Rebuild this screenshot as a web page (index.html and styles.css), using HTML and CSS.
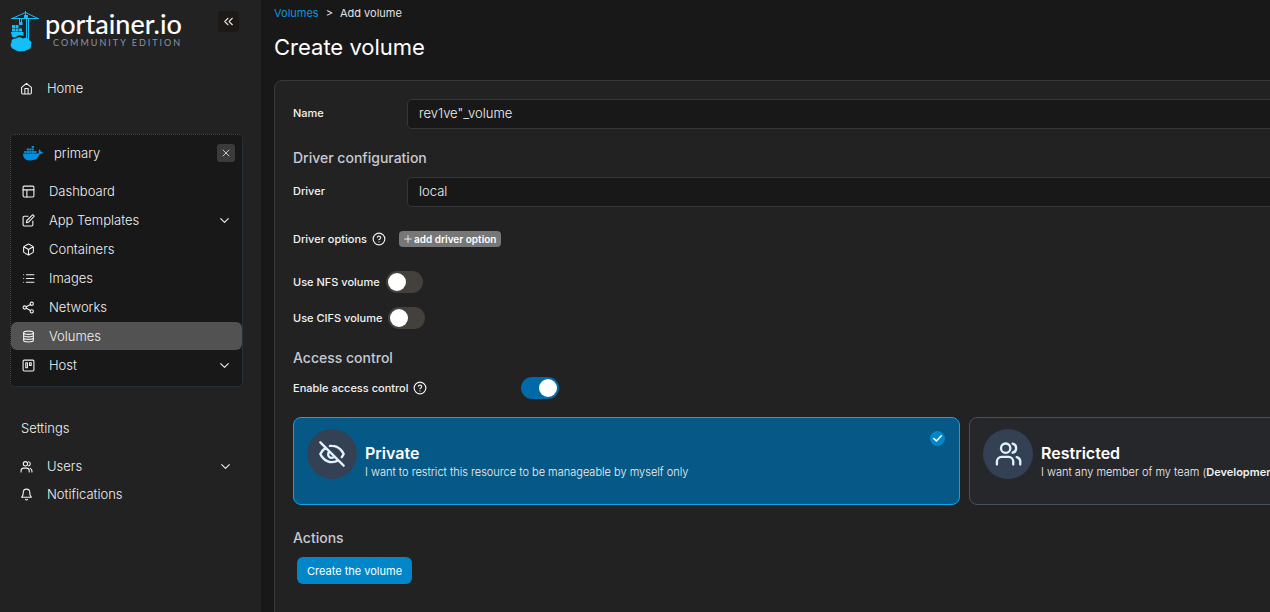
FILE: index.html
```html
<!DOCTYPE html>
<html lang="en">
<head>
<meta charset="utf-8">
<title>Create volume</title>
<link rel="stylesheet" href="styles.css">
</head>
<body>
<svg class="sprite" aria-hidden="true">
  <symbol id="home" viewBox="0 0 24 24"><path d="M3 10l9-7.500 9 7.500v10a2 2 0 0 1-2 2H5a2 2 0 0 1-2-2zM9 22V12h6v10"/></symbol>
  <symbol id="layout" viewBox="0 0 24 24"><rect x="2" y="2" width="20" height="20" rx="2"/><path d="M2 9h20M9 22V9"/></symbol>
  <symbol id="edit" viewBox="0 0 24 24"><path d="M11 4H4a2 2 0 0 0-2 2v14a2 2 0 0 0 2 2h14a2 2 0 0 0 2-2v-7"/><path d="M18.500 2.500a2.120 2.120 0 0 1 3 3L12 15l-4 1 1-4z"/></symbol>
  <symbol id="box" viewBox="0 0 24 24"><path d="M21 16V8a2 2 0 0 0-1-1.730l-7-4a2 2 0 0 0-2 0l-7 4A2 2 0 0 0 3 8v8a2 2 0 0 0 1 1.730l7 4a2 2 0 0 0 2 0l7-4A2 2 0 0 0 21 16zM3.300 7L12 12l8.700-5M12 22V12"/></symbol>
  <symbol id="list" viewBox="0 0 24 24"><path d="M8 5h14M8 12h14M8 19h14M3 5h.01M3 12h.01M3 19h.01"/></symbol>
  <symbol id="share" viewBox="0 0 24 24"><circle cx="18" cy="5" r="3"/><circle cx="5" cy="12" r="3"/><circle cx="18" cy="19" r="3"/><path d="M8 13.500l7.500 4M15.500 6.500l-7.500 4"/></symbol>
  <symbol id="database" viewBox="0 0 24 24"><ellipse cx="12" cy="5" rx="9" ry="3"/><path d="M3 5v14c0 1.660 4 3 9 3s9-1.340 9-3V5M3 9.700c0 1.660 4 3 9 3s9-1.340 9-3M3 14.300c0 1.660 4 3 9 3s9-1.340 9-3"/></symbol>
  <symbol id="trello" viewBox="0 0 24 24"><rect x="2" y="2" width="20" height="20" rx="2"/><path d="M7 7h3v9H7zM14 7h3v5h-3z"/></symbol>
  <symbol id="users" viewBox="0 0 24 24"><path d="M17 22v-2a5 5 0 0 0-5-5H7a5 5 0 0 0-5 5v2M22 22v-2a5 5 0 0 0-3-4.500M16 3.130a4 4 0 0 1 0 7.750"/><circle cx="10" cy="7" r="4"/></symbol>
  <symbol id="team" viewBox="0 0 24 24"><path d="M16.500 21v-2.500a4 4 0 0 0-4-4h-6a4 4 0 0 0-4 4V21M22.500 21v-2.500a4 4 0 0 0-3-3.870M16 3.130a4 4 0 0 1 0 7.750"/><circle cx="10" cy="7" r="4"/></symbol>
  <symbol id="bell" viewBox="0 0 24 24"><path d="M6 8a6 6 0 0 1 12 0c0 7 3 9 3 9H3s3-2 3-9M10.300 21a1.940 1.940 0 0 0 3.400 0"/></symbol>
  <symbol id="down" viewBox="0 0 24 24"><path d="M5 8.500l7 7 7-7"/></symbol>
  <symbol id="close" viewBox="0 0 24 24"><path d="M18 6L6 18M6 6l12 12"/></symbol>
  <symbol id="collapse" viewBox="0 0 24 24"><path d="M11 18l-6-6 6-6M19 18l-6-6 6-6"/></symbol>
  <symbol id="help" viewBox="0 0 24 24"><circle cx="12" cy="12" r="10"/><path d="M9.100 9a3 3 0 0 1 5.800 1c0 2-3 3-3 3M12 17h.01"/></symbol>
  <symbol id="plus" viewBox="0 0 24 24"><path d="M12 4v16M4 12h16"/></symbol>
  <symbol id="eyeoff" viewBox="0 0 24 24"><path d="M10.200 5.100A10.500 10.500 0 0 1 12 5c7 0 10 7 10 7a13 13 0 0 1-1.700 2.700M6.600 6.600A13.500 13.500 0 0 0 2 12s3 7 10 7a9.700 9.700 0 0 0 5.400-1.600M9.900 9.900a3 3 0 1 0 4.200 4.200M2 2l20 20"/></symbol>
  <symbol id="check" viewBox="0 0 24 24"><path d="M19 7L10 16.500 5 12"/></symbol>
</svg>
<div class="app">
  <aside class="sidebar">
    <header class="brand">
      <svg class="crane" viewBox="0 0 30 42" aria-hidden="true">
        <path class="crane-line" d="M1 8.500h28M2 8.500L15.500 2.500 28 8.500M15.500 1v8M9.500 9v5M11.500 9v5M16.500 9v22M18.500 9v22"/>
        <path class="crane-fill" d="M14 5h4v3h-4zM9 12h3.500v3H9zM2 15h3v3H2zM5.500 15h3v3h-3zM2 18.500h3v3H2zM5.500 18.500h3v3h-3zM9 18.500h3v3H9zM1 22h12.500v4q-5-2-8 1.500-3 0-3.500-1z"/>
        <path class="crane-fill" d="M4.500 39.500a4.500 4.500 0 0 1-3-7q-.5-4 4.500-4 3-2.500 7 0 4-2 6 1.500 3.500 1 2 5 .5 5-4.500 5-2 2-4.500 1-3 1.500-7.500-1.500z"/>
      </svg>
      <div class="brand-text">
        <div class="brand-name">portainer.io</div>
        <div class="brand-edition">COMMUNITY EDITION</div>
      </div>
      <button class="collapse" type="button" aria-label="Collapse sidebar"><svg class="icon"><use href="#collapse"/></svg></button>
    </header>
    <nav class="nav">
      <a class="item" href="#"><svg class="icon"><use href="#home"/></svg><span>Home</span></a>
    </nav>
    <section class="environment">
      <div class="env-head">
        <svg class="whale" viewBox="0 0 24 18" aria-hidden="true"><path d="M10.500 0h2.600v2.400h-2.600zM4.500 3h2.600v2.400H4.500zM7.500 3h2.600v2.400H7.500zM10.500 3h2.600v2.400h-2.600zM1.500 6h2.600v2.400H1.500zM4.500 6h2.600v2.400H4.500zM7.500 6h2.600v2.400H7.500zM10.500 6h2.600v2.400h-2.600zM13.500 6h2.600v2.400h-2.600zM0 9h17q1.300 0 2-.7Q18 6 19.500 4q2 1.200 2 3 1.500-.3 2.500.5Q23 10 20 10q-3 7.500-11 7.500Q0 17.500 0 9z"/></svg>
        <span class="env-name">primary</span>
        <button class="close" type="button" aria-label="Close environment"><svg class="icon"><use href="#close"/></svg></button>
      </div>
      <nav class="env-nav">
        <a class="item" href="#"><svg class="icon"><use href="#layout"/></svg><span>Dashboard</span></a>
        <a class="item" href="#"><svg class="icon"><use href="#edit"/></svg><span>App Templates</span><svg class="icon chevron"><use href="#down"/></svg></a>
        <a class="item" href="#"><svg class="icon"><use href="#box"/></svg><span>Containers</span></a>
        <a class="item" href="#"><svg class="icon"><use href="#list"/></svg><span>Images</span></a>
        <a class="item" href="#"><svg class="icon"><use href="#share"/></svg><span>Networks</span></a>
        <a class="item active" href="#" aria-current="page"><svg class="icon"><use href="#database"/></svg><span>Volumes</span></a>
        <a class="item" href="#"><svg class="icon"><use href="#trello"/></svg><span>Host</span><svg class="icon chevron"><use href="#down"/></svg></a>
      </nav>
    </section>
    <div class="nav-title">Settings</div>
    <nav class="nav">
      <a class="item" href="#"><svg class="icon"><use href="#users"/></svg><span>Users</span><svg class="icon chevron"><use href="#down"/></svg></a>
      <a class="item" href="#"><svg class="icon"><use href="#bell"/></svg><span>Notifications</span></a>
    </nav>
  </aside>
  <main class="main">
    <nav class="crumbs"><a href="#">Volumes</a><span>&gt;</span><span>Add volume</span></nav>
    <h1>Create volume</h1>
    <form class="panel">
      <div class="field"><label for="name">Name</label><input class="control" id="name" type="text" value="rev1ve&quot;_volume"></div>
      <h2>Driver configuration</h2>
      <div class="field"><label for="driver">Driver</label><select class="control" id="driver"><option>local</option></select></div>
      <div class="options"><span>Driver options</span><svg class="icon help"><use href="#help"/></svg><button class="add" type="button"><svg class="icon"><use href="#plus"/></svg>add driver option</button></div>
      <div class="toggle"><label for="nfs">Use NFS volume</label><input class="switch" id="nfs" type="checkbox"></div>
      <div class="toggle"><label for="cifs">Use CIFS volume</label><input class="switch" id="cifs" type="checkbox"></div>
      <h2 class="access-title">Access control</h2>
      <div class="access"><label for="access">Enable access control<svg class="icon help"><use href="#help"/></svg></label><input class="switch" id="access" type="checkbox" checked></div>
      <div class="cards">
        <label class="card selected">
          <input class="card-radio" type="radio" name="ownership" checked>
          <span class="badge"><svg class="icon"><use href="#eyeoff"/></svg></span>
          <span class="card-text"><strong class="card-title">Private</strong><span>I want to restrict this resource to be manageable by myself only</span></span>
          <span class="tick"><svg class="icon"><use href="#check"/></svg></span>
        </label>
        <label class="card">
          <input class="card-radio" type="radio" name="ownership">
          <span class="badge"><svg class="icon"><use href="#team"/></svg></span>
          <span class="card-text"><strong class="card-title">Restricted</strong><span>I want any member of my team (<b>Development</b>)</span></span>
        </label>
      </div>
      <h2>Actions</h2>
      <button class="submit" type="button">Create the volume</button>
    </form>
  </main>
</div>
</body>
</html>
```
FILE: styles.css
```css
* { box-sizing: border-box; }
body {
  margin: 0;
  background: #181818;
  color: #f2f2f2;
  font: 11px/16px Inter, "Liberation Sans", sans-serif;
  overflow: hidden;
}
button, input, select { font-family: inherit; margin: 0; }
button { border: 0; padding: 0; display: inline-flex; align-items: center; justify-content: center; }
a { text-decoration: none; color: inherit; }
.sprite { position: absolute; width: 0; height: 0; }
.icon {
  width: 14px;
  height: 14px;
  flex: none;
  fill: none;
  stroke: currentColor;
  stroke-width: 2;
  stroke-linecap: round;
  stroke-linejoin: round;
}
.app { display: flex; min-height: 100vh; }

.sidebar { width: 261px; flex: none; background: #222; padding: 10px; font-size: 13px; font-weight: 300; }
.brand { display: flex; align-items: flex-start; height: 64px; }
.crane { width: 30px; height: 42px; }
.crane-line { fill: none; stroke: #13bef9; stroke-width: 1; }
.crane-fill { fill: #13bef9; }
.brand-text { margin-left: 5px; color: #fff; }
.brand-name { font: 500 27px/28px Lato, sans-serif; }
.brand-edition { padding-left: 8px; font: 9px/10px Lato, sans-serif; letter-spacing: 2px; color: #8c94a8; }
.collapse { width: 21px; height: 21px; margin: 1px 12px 0 auto; border-radius: 4px; background: #1c1917; color: #e7e5e4; }
.collapse .icon { width: 13px; height: 13px; }
.item { display: flex; align-items: center; gap: 14px; height: 28px; padding: 0 11px; border-radius: 6px; color: #f2f2f2; }
.nav { padding-right: 9px; }
.nav .item { padding: 0 10px; }
.item .icon { width: 13px; height: 13px; }
.item .chevron { margin-left: auto; }
.environment { width: 233px; margin-top: 32px; border: 1px dotted #3a4556; border-radius: 5px; background: #181818; padding-bottom: 7px; }
.env-head { display: flex; align-items: center; height: 36px; padding: 0 7px 0 12px; }
.whale { width: 20px; height: 15px; fill: #0091e2; }
.env-name { margin-left: 11px; }
.close { width: 18px; height: 18px; margin-left: auto; border-radius: 3px; background: #3b3b3b; color: #c8c8c8; }
.close .icon { width: 12px; height: 12px; }
.env-nav { display: grid; gap: 1px; padding-top: 6px; }
.active { background: #525252; }
.nav-title { padding: 33px 11px 16px; color: #f2f2f2; }

.main { flex: 1; min-width: 0; padding: 5px 0 0 13px; }
.crumbs { display: flex; gap: 7px; color: #e2e2e6; }
.crumbs a { color: #0e95d8; }
h1 { margin: 11px 0 18px; font-size: 22px; line-height: 30px; font-weight: 400; color: #fff; }
.panel { min-width: 1381px; min-height: 540px; padding: 18px; border: 1px solid #383838; border-radius: 8px; background: #222; }
.panel label, .options { font-weight: 500; }
.field { display: grid; grid-template-columns: 114px 1fr; align-items: center; }
.field label { padding-bottom: 2px; }
.control { appearance: none; height: 30px; width: 100%; padding: 0 11px 2px; border: 1px solid #363636; border-radius: 5px; background: #181818; color: #f2f2f2; font-size: 13px; font-weight: 300; outline: 0; }
h2 { margin: 19px 0 9px; font-size: 14px; line-height: 20px; font-weight: 500; color: #c8cad3; }
.options { display: flex; align-items: center; margin: 24px 0; }
.help { margin-left: 5px; }
.add { height: 16px; margin-left: 13px; padding: 0 5px 0 4px; gap: 1px; border-radius: 4px; background: #777; color: #fff; font-size: 10px; font-weight: 600; }
.add .icon { width: 10px; height: 10px; }
.toggle { display: flex; align-items: center; gap: 6px; height: 22px; margin-bottom: 14px; }
.switch { appearance: none; width: 37px; height: 22px; padding: 2px; border-radius: 11px; background: #44403c; display: flex; }
.switch::before { content: ""; width: 18px; height: 18px; border-radius: 50%; background: #fff; }
.switch:checked { width: 38px; background: #0069a7; justify-content: flex-end; }
.access-title { margin: 19px 0 9px; }
.access { display: grid; grid-template-columns: 228px 1fr; align-items: center; }
.access label { display: flex; align-items: center; }
.cards { display: grid; grid-template-columns: 1fr 1fr; gap: 9px; margin-top: 18px; }
.card { position: relative; display: flex; height: 88px; padding: 11px 13px; border: 1px solid #475060; border-radius: 8px; background: #26272b; }
.panel .card { font-weight: 300; }
.selected { background: #065986; border-color: #0ba5ec; }
.card-radio { position: absolute; opacity: 0; }
.badge { display: grid; place-items: center; width: 50px; height: 50px; flex: none; border-radius: 50%; background: #344054; color: #e0f2fe; }
.badge .icon { width: 28px; height: 28px; }
.card-text { margin: 14px 0 0 8px; white-space: nowrap; }
.card-title { display: block; font-size: 16px; line-height: 20px; font-weight: 600; margin-bottom: 1px; color: #fff; }
.card b { font-weight: 600; }
.tick { display: grid; place-items: center; width: 15px; height: 15px; margin: 2px 1px 0 auto; border-radius: 50%; background: #0086c9; color: #fff; }
.tick .icon { width: 13px; height: 13px; stroke-width: 3; }
.cards + h2 { margin: 23px 0 9px; }
.submit { height: 27px; margin-left: 4px; padding: 0 10px; border-radius: 6px; background: #0086c9; color: #fff; font-size: 11px; }
```
